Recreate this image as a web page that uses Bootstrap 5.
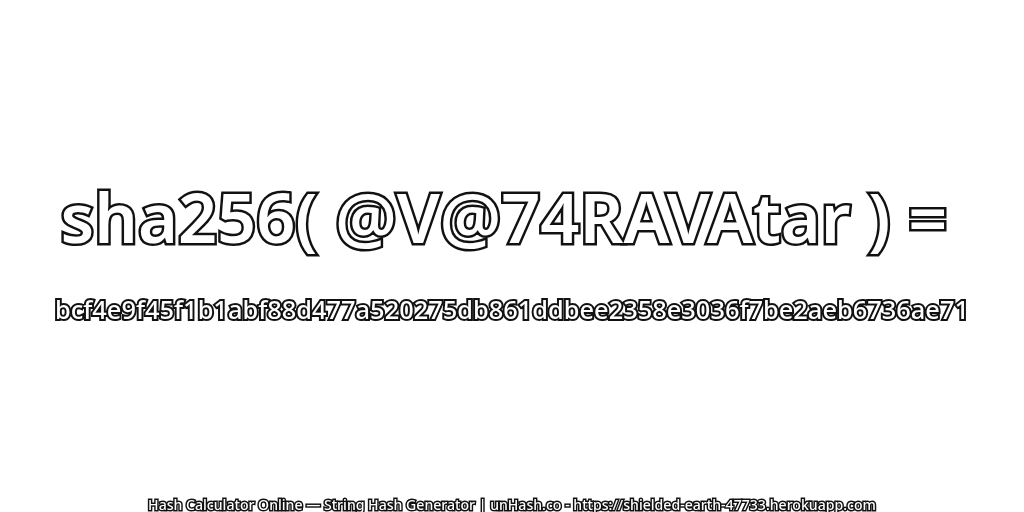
<!DOCTYPE html>
<html><head><meta charset="utf-8">
<link href="https://cdn.jsdelivr.net/npm/bootstrap@5.3.0/dist/css/bootstrap.min.css" rel="stylesheet">
<style>
html,body{height:512px;margin:0;background:#fff;overflow:hidden}
.stage{height:512px;font-family:"Noto Sans","DejaVu Sans",sans-serif;color:#fff;font-weight:500;will-change:transform}
.ttl,.hsh,.ftr{line-height:1;white-space:nowrap;paint-order:stroke fill}
.ttl{font-size:68.4px;font-weight:600;-webkit-text-stroke:5px #111;margin-top:183px;padding-right:16px}
.hsh{font-size:25.4px;-webkit-text-stroke:4px #111;margin-top:46px}
.ftr{font-size:14.1px;-webkit-text-stroke:3px #111}
</style></head><body>
<div class="stage d-flex flex-column align-items-center">
<div class="ttl">sha256( @V@74RAVAtar ) =</div>
<div class="hsh">bcf4e9f45f1b1abf88d477a520275db861ddbee2358e3036f7be2aeb6736ae71</div>
<div class="ftr mt-auto">Hash Calculator Online — String Hash Generator | unHash.co - https://shielded-earth-47733.herokuapp.com</div>
</div>
<script src="https://cdn.jsdelivr.net/npm/bootstrap@5.3.0/dist/js/bootstrap.bundle.min.js"></script>
</body></html>
